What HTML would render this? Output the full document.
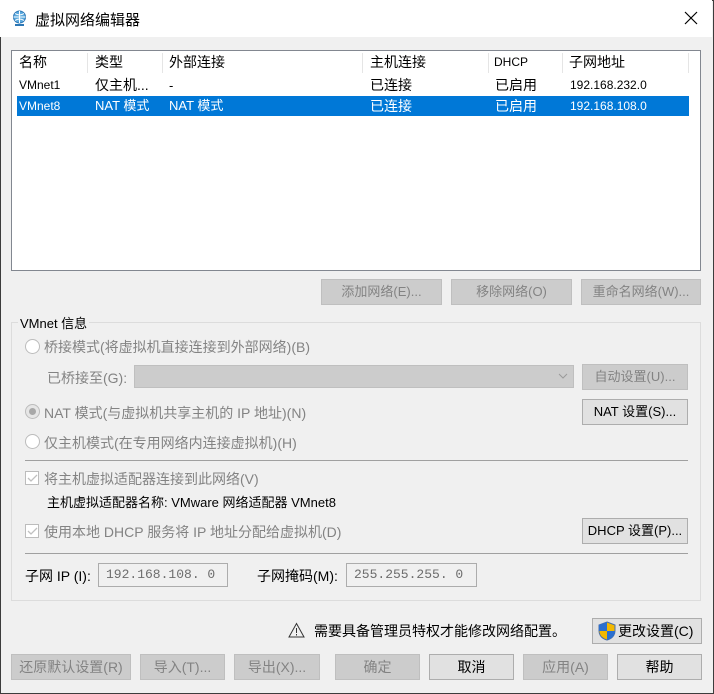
<!DOCTYPE html>
<html><head><meta charset="utf-8"><style>
*{box-sizing:border-box;margin:0;padding:0}
body{width:714px;height:694px;overflow:hidden;background:#f0f0f0;font-family:"Liberation Sans","Noto Sans CJK SC",sans-serif;font-size:13px;color:#000;position:relative}
.a{position:absolute;white-space:nowrap}
#win{position:absolute;left:0;top:0;width:714px;height:694px;border:1px solid #3c3c3c}
#title{position:absolute;left:0;top:0;width:712px;height:37px;background:#fff}
.btn{position:absolute;height:26px;border:1px solid #adadad;background:#e1e1e1;text-align:center;line-height:24px;font-size:13px}
.dis{background:#cccccc;border-color:#bfbfbf;color:#838383}
.g{color:#838383}
.hd{position:absolute;top:0;height:23px;line-height:23px;font-size:14px}
.sep{position:absolute;top:2px;width:1px;height:20px;background:#e5e5e5}
.radio{position:absolute;width:15px;height:15px;border:1px solid #bcbcbc;border-radius:50%;background:#fff}
.cb{position:absolute;width:14px;height:14px;border:1px solid #bcbcbc;background:#fff}
.inp{position:absolute;height:24px;border:1px solid #acacac;background:#f0f0f0;color:#6d6d6d;font-family:"Liberation Mono","DejaVu Sans Mono",monospace;font-size:13px;line-height:22px;padding-left:7px}
.hl{position:absolute;height:1px;background:#a0a0a0}
</style></head><body>
<div id="win"></div>
<div id="title">
<svg class="a" style="left:11px;top:10px" width="17" height="17" viewBox="0 0 17 17"><circle cx="8.5" cy="7" r="6" fill="#5aa9de" stroke="#2d77b5"/><path d="M2.5 7h12M8.5 1v12M4 3.5c3 2 6 2 9 0M4 10.5c3-2 6-2 9 0" stroke="#fff" fill="none" stroke-width="1"/><rect x="4" y="14" width="9" height="2" fill="#2d77b5"/></svg>
<div class="a" style="left:35px;top:9px;font-size:15px">虚拟网络编辑器</div>
<svg class="a" style="left:684px;top:11px" width="14" height="14"><path d="M1 1L13 13M13 1L1 13" stroke="#000" stroke-width="1.2"/></svg>
</div>
<div class="a" style="left:11px;top:50px;width:690px;height:221px;background:#fff;border:1px solid #828790">
 <div class="hd" style="left:7px">名称</div><div class="sep" style="left:75px"></div>
 <div class="hd" style="left:83px">类型</div><div class="sep" style="left:150px"></div>
 <div class="hd" style="left:157px">外部连接</div><div class="sep" style="left:350px"></div>
 <div class="hd" style="left:358px">主机连接</div><div class="sep" style="left:476px"></div>
 <div class="hd" style="left:482px;font-size:12px">DHCP</div><div class="sep" style="left:550px"></div>
 <div class="hd" style="left:557px">子网地址</div><div class="sep" style="left:676px"></div>
 <div class="a" style="left:6px;top:25px;width:671px;height:19px;line-height:19px">
  <span class="a" style="left:1px;font-size:12px">VMnet1</span><span class="a" style="left:77px;font-size:14px">仅主机...</span><span class="a" style="left:151px">-</span><span class="a" style="left:352px;font-size:14px">已连接</span><span class="a" style="left:477px;font-size:14px">已启用</span><span class="a" style="left:552px;font-size:12px">192.168.232.0</span>
 </div>
 <div class="a" style="left:5px;top:45px;width:672px;height:20px;line-height:20px;background:#0078d7;color:#fff">
  <span class="a" style="left:2px;font-size:12px">VMnet8</span><span class="a" style="left:78px;font-size:13px">NAT 模式</span><span class="a" style="left:152px;font-size:13px">NAT 模式</span><span class="a" style="left:353px;font-size:14px">已连接</span><span class="a" style="left:478px;font-size:14px">已启用</span><span class="a" style="left:553px;font-size:12px">192.168.108.0</span>
 </div>
</div>
<div class="btn dis" style="left:321px;top:279px;width:121px">添加网络(E)...</div>
<div class="btn dis" style="left:451px;top:279px;width:121px">移除网络(O)</div>
<div class="btn dis" style="left:581px;top:279px;width:120px">重命名网络(W)...</div>

<div class="a" style="left:11px;top:322px;width:690px;height:279px;border:1px solid #dcdcdc"></div>
<div class="a" style="left:18px;top:313px;background:#f0f0f0;padding:0 2px;font-size:13px">VMnet 信息</div>

<div class="radio" style="left:25px;top:339px"></div>
<div class="a g" style="left:44px;top:337px;font-size:14px">桥接模式(将虚拟机直接连接到外部网络)(B)</div>
<div class="a g" style="left:47px;top:368px;font-size:14px">已桥接至(G):</div>
<div class="a" style="left:134px;top:365px;width:440px;height:23px;background:#cccccc;border:1px solid #bfbfbf"></div>
<svg class="a" style="left:558px;top:373px" width="10" height="6"><path d="M1 1l4 4 4-4" stroke="#9a9a9a" fill="none"/></svg>
<div class="btn dis" style="left:582px;top:364px;width:106px">自动设置(U)...</div>

<div class="radio" style="left:25px;top:404px;background:#e6e6e6"></div>
<div class="a" style="left:29px;top:408px;width:7px;height:7px;border-radius:50%;background:#a8a8a8"></div>
<div class="a g" style="left:44px;top:403px;font-size:14px">NAT 模式(与虚拟机共享主机的 IP 地址)(N)</div>
<div class="btn" style="left:582px;top:399px;width:106px">NAT 设置(S)...</div>

<div class="radio" style="left:25px;top:434px"></div>
<div class="a g" style="left:44px;top:433px;font-size:14px">仅主机模式(在专用网络内连接虚拟机)(H)</div>

<div class="hl" style="left:25px;top:460px;width:663px"></div>
<div class="cb" style="left:25px;top:471px"></div>
<svg class="a" style="left:27px;top:474px" width="11" height="9"><path d="M1 4l3 3 6-6" stroke="#c0c0c0" fill="none" stroke-width="1.3"/></svg>
<div class="a g" style="left:44px;top:469px;font-size:14px">将主机虚拟适配器连接到此网络(V)</div>
<div class="a" style="left:47px;top:492px;font-size:13px">主机虚拟适配器名称: VMware 网络适配器 VMnet8</div>
<div class="cb" style="left:25px;top:524px"></div>
<svg class="a" style="left:27px;top:527px" width="11" height="9"><path d="M1 4l3 3 6-6" stroke="#c0c0c0" fill="none" stroke-width="1.3"/></svg>
<div class="a g" style="left:44px;top:522px;font-size:14px">使用本地 DHCP 服务将 IP 地址分配给虚拟机(D)</div>
<div class="btn" style="left:582px;top:518px;width:106px">DHCP 设置(P)...</div>
<div class="hl" style="left:25px;top:553px;width:663px"></div>

<div class="a" style="left:25px;top:566px;font-size:14px">子网 IP (I):</div>
<div class="inp" style="left:98px;top:563px;width:130px">192.168.108. 0</div>
<div class="a" style="left:257px;top:566px;font-size:14px">子网掩码(M):</div>
<div class="inp" style="left:346px;top:563px;width:131px">255.255.255. 0</div>

<svg class="a" style="left:288px;top:622px" width="17" height="16"><path d="M8.5 1.5L16 15H1z" stroke="#333" fill="none"/><path d="M8.5 6v5M8.5 12v1.5" stroke="#333"/></svg>
<div class="a" style="left:314px;top:621px;font-size:14px">需要具备管理员特权才能修改网络配置。</div>
<div class="btn" style="left:592px;top:618px;width:110px;text-align:left;padding-left:25px;font-size:14px">更改设置(C)</div>
<svg class="a" style="left:598px;top:621px" width="18" height="20" viewBox="0 0 18 20"><path d="M9 1L17 4v6c0 5-4 8-8 9-4-1-8-4-8-9V4z" fill="#f2b800" stroke="#4a6ea8"/><path d="M9 1v9H1V4zM9 10h8c0 5-4 8-8 9z" fill="#2b6fcf"/></svg>

<div class="btn dis" style="left:11px;top:654px;width:120px;font-size:14px">还原默认设置(R)</div>
<div class="btn dis" style="left:140px;top:654px;width:85px;font-size:14px">导入(T)...</div>
<div class="btn dis" style="left:234px;top:654px;width:86px;font-size:14px">导出(X)...</div>
<div class="btn dis" style="left:335px;top:654px;width:85px;font-size:14px">确定</div>
<div class="btn" style="left:429px;top:654px;width:85px;font-size:14px">取消</div>
<div class="btn dis" style="left:523px;top:654px;width:85px;font-size:14px">应用(A)</div>
<div class="btn" style="left:617px;top:654px;width:85px;font-size:14px">帮助</div>
</body></html>
